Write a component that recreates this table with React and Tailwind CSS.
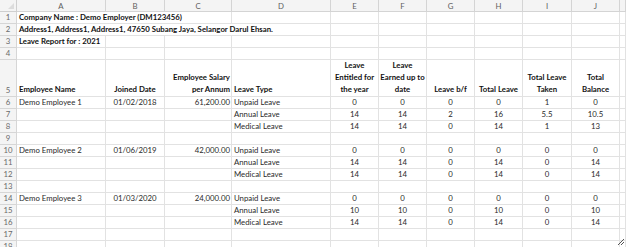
import React from 'react';

const LETTERS = ['A', 'B', 'C', 'D', 'E', 'F', 'G', 'H', 'I', 'J', ''];

// one entry per sheet row; each row lists cells A..J (null = empty)
const t = (v, align = 'center') => ({ v, align });
const num = (vals) => vals.map((v) => t(v));

const empRow = (name, date, salary, type, vals) => [
    t(name, 'left'), t(date), t(salary, 'right'), t(type, 'left'), ...num(vals),
];
const typeRow = (type, vals) => [null, null, null, t(type, 'left'), ...num(vals)];

const ROWS = [
    [{ v: 'Company Name : Demo Employer (DM123456)', align: 'left', bold: true, span: 3 }],
    [{ v: 'Address1, Address1, Address1, 47650 Subang Jaya, Selangor Darul Ehsan.', align: 'left', bold: true, span: 4 }],
    [{ v: 'Leave Report for : 2021', align: 'left', bold: true }],
    [],
    'header',
    empRow('Demo Employee 1', '01/02/2018', '61,200.00', 'Unpaid Leave', ['0', '0', '0', '0', '1', '0']),
    typeRow('Annual Leave', ['14', '14', '2', '16', '5.5', '10.5']),
    typeRow('Medical Leave', ['14', '14', '0', '14', '1', '13']),
    [],
    empRow('Demo Employee 2', '01/06/2019', '42,000.00', 'Unpaid Leave', ['0', '0', '0', '0', '0', '0']),
    typeRow('Annual Leave', ['14', '14', '0', '14', '0', '14']),
    typeRow('Medical Leave', ['14', '14', '0', '14', '0', '14']),
    [],
    empRow('Demo Employee 3', '01/03/2020', '24,000.00', 'Unpaid Leave', ['0', '0', '0', '0', '0', '0']),
    typeRow('Annual Leave', ['10', '10', '0', '10', '0', '10']),
    typeRow('Medical Leave', ['14', '14', '0', '14', '0', '14']),
    [],
    [],
    [],
];

const HEADERS = [
    { lines: ['Employee Name'], align: 'left' },
    { lines: ['Joined Date'], align: 'center' },
    { lines: ['Employee Salary', 'per Annum'], align: 'right' },
    { lines: ['Leave Type'], align: 'left' },
    { lines: ['Leave', 'Entitled for', 'the year'], align: 'center' },
    { lines: ['Leave', 'Earned up to', 'date'], align: 'center' },
    { lines: ['Leave b/f'], align: 'center' },
    { lines: ['Total Leave'], align: 'center' },
    { lines: ['Total Leave', 'Taken'], align: 'center' },
    { lines: ['Total', 'Balance'], align: 'center' },
];

const ALIGN = {
    left: 'justify-start pl-[2px]',
    center: 'justify-center',
    right: 'justify-end pr-[1px]',
};
const HALIGN = {
    left: 'items-start pl-[2px]',
    center: 'items-center',
    right: 'items-end pr-[1px]',
};
const SPAN = { 3: 'col-span-3', 4: 'col-span-4' };

const cellBase = 'border-r border-b border-[#e2e2e2] overflow-visible whitespace-nowrap';

function RowHead({ n }) {
    return (
        <div className="border-r border-b border-[#d6d6d6] bg-[#f4f4f4] text-[#6a6a6a] flex items-end justify-center pb-[1px] leading-[10px]">
            {n}
        </div>
    );
}

function DataRow({ cells, n }) {
    const out = [];
    let col = 0;
    cells.forEach((c) => {
        if (!c) {
            out.push(<div key={col} className={cellBase} />);
            col += 1;
            return;
        }
        out.push(
            <div
                key={col}
                className={`${cellBase} ${SPAN[c.span] || ''} flex items-end pb-[1px] leading-[10px] ${ALIGN[c.align]} ${c.bold ? 'font-bold text-[#111]' : 'text-[#2a2a2a]'}`}
            >
                {c.v}
            </div>
        );
        col += c.span || 1;
    });
    while (col < 11) {
        out.push(<div key={col} className={cellBase} />);
        col += 1;
    }
    return (
        <>
            <RowHead n={n} />
            {out}
        </>
    );
}

function HeaderRow() {
    return (
        <>
            <RowHead n={5} />
            {HEADERS.map((h, i) => (
                <div
                    key={i}
                    className={`${cellBase} flex flex-col justify-end pb-[1px] leading-[12px] font-bold text-[#111] ${HALIGN[h.align]}`}
                >
                    {h.lines.map((l) => (
                        <span key={l}>{l}</span>
                    ))}
                </div>
            ))}
            <div className={cellBase} />
        </>
    );
}

export default function App() {
    return (
        <div className="w-[626px] h-[247px] overflow-hidden bg-white relative font-['Lato','Liberation_Sans',sans-serif] text-[7.8px]">
            <div className="grid grid-cols-[17px_89px_59px_67px_99px_48px_48px_48px_48px_49px_48px_1fr] grid-rows-[12px_12px_12px_12px_12px_37px_repeat(14,12px)]">
                {/* corner */}
                <div className="border-r border-b border-[#cfcfcf] bg-[#f4f4f4] relative">
                    <div className="absolute right-[2px] bottom-[2px] w-0 h-0 border-l-[6px] border-l-transparent border-b-[6px] border-b-[#dcdcdc]" />
                </div>
                {LETTERS.map((l, i) => (
                    <div
                        key={i}
                        className="border-r border-b border-[#d4d4d4] bg-[#f4f4f4] text-[#5e5e5e] flex items-center justify-center leading-[10px]"
                    >
                        {l}
                    </div>
                ))}
                {ROWS.map((r, i) =>
                    r === 'header' ? <HeaderRow key={i} /> : <DataRow key={i} cells={r} n={i + 1} />
                )}
            </div>
            {/* resize grip */}
            <svg className="absolute right-[1px] bottom-[1px]" width="8" height="8" viewBox="0 0 8 8">
                <path d="M1 7 L7 1 M4 7 L7 4" stroke="#555" strokeWidth="1" />
            </svg>
        </div>
    );
}
